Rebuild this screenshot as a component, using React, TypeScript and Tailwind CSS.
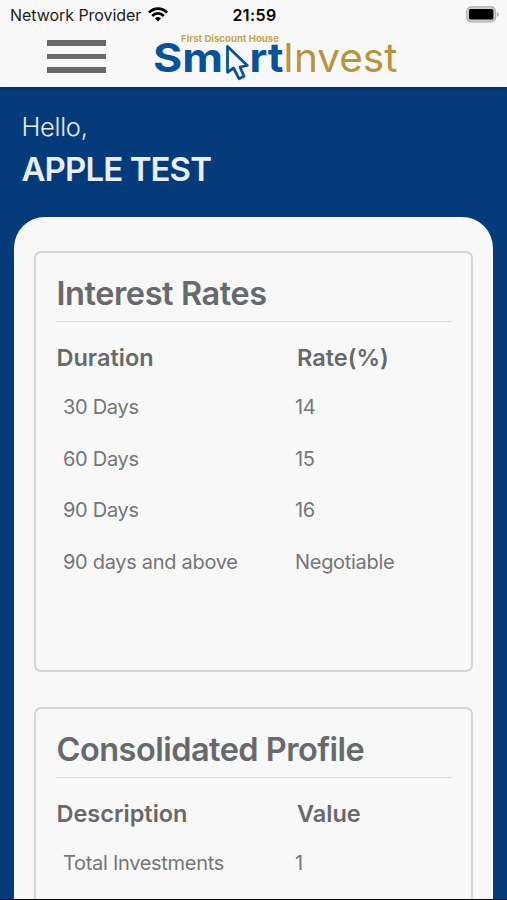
interface Row {
  label: string;
  value: string;
}

interface PanelProps {
  title: string;
  titleClass: string;
  columns: [string, string];
  rows: Row[];
  className?: string;
}

const rates: Row[] = [
  { label: "30 Days", value: "14" },
  { label: "60 Days", value: "15" },
  { label: "90 Days", value: "16" },
  { label: "90 days and above", value: "Negotiable" },
];

const profile: Row[] = [{ label: "Total Investments", value: "1" }];

function StatusBar() {
  return (
    <div className="grid h-7 grid-cols-[1fr_auto_1fr] items-center pl-2.5 pr-[8px] pt-[2px] text-black">
      <div className="flex items-center gap-[7px]">
        <span className="whitespace-nowrap text-[16px] leading-5 tracking-[-0.05px] text-[#1c1c1c]">Network Provider</span>
        <svg width="20" height="15" viewBox="0 0 20 15" fill="none" stroke="#000" strokeWidth="2.7" className="-mt-px">
          <path d="M1 5.6C6 .3 14 .3 19 5.6" />
          <path d="M4.2 9C7.5 5.6 12.5 5.6 15.8 9" />
          <path d="M10 14.4 7 11.4Q10 8.8 13 11.4Z" fill="#000" stroke="none" />
        </svg>
      </div>
      <span className="text-[16px] font-semibold leading-5 tracking-[0.4px]">21:59</span>
      <svg width="33" height="17" viewBox="0 0 33 17" className="-mt-[2px] justify-self-end">
        <rect x="0.8" y="0.8" width="28.8" height="15" rx="4.5" fill="#d0d0d0" stroke="#b0b0b0" strokeWidth="1.2" />
        <rect x="3" y="3" width="24.4" height="10.6" rx="1.6" fill="#000" />
        <path d="M31 6v4.8q1.8-.8 1.8-2.4T31 6Z" fill="#b0b0b0" />
      </svg>
    </div>
  );
}

function Logo() {
  return (
    <svg width="248" height="52" viewBox="0 0 248 52" aria-label="SmartInvest" fontFamily="Inter, sans-serif">
      <text x="30" y="11.5" fontSize="9.6" fontWeight="700" fill="#c6a552" textLength="98" lengthAdjust="spacingAndGlyphs">
        First Discount House
      </text>
      <g fill="#07539b" fontSize="40" fontWeight="750">
        <text x="2" y="41.5" textLength="70" lengthAdjust="spacingAndGlyphs">Sm</text>
        <text x="98.5" y="41.5" textLength="34" lengthAdjust="spacingAndGlyphs">rt</text>
      </g>
      <text x="132" y="41.5" fontSize="40" fontWeight="400" fill="#b8943b" textLength="114.5" lengthAdjust="spacingAndGlyphs">
        Invest
      </text>
      <path
        d="M76.5 16.5V42.3L82.5 38 88 48.7 93 46.2 89 37 96.3 35.5Z"
        fill="#f8f8f8"
        stroke="#07539b"
        strokeWidth="2.8"
        strokeLinejoin="round"
      />
    </svg>
  );
}

function Header() {
  return (
    <header className="relative h-[87px] shrink-0 bg-[#f8f8f8] shadow-[0_1px_4px_rgba(0,0,0,0.3)]">
      <StatusBar />
      <div className="flex items-start pl-[47px]">
        <button className="mt-[12px] flex w-[59px] flex-col gap-[8px]" aria-label="Menu">
          <span className="h-[5.5px] w-full bg-[#686868]" />
          <span className="h-[5.5px] w-full bg-[#686868]" />
          <span className="h-[5.5px] w-full bg-[#686868]" />
        </button>
        <div className="ml-[45px] mt-[2px]">
          <Logo />
        </div>
      </div>
    </header>
  );
}

function Panel({ title, titleClass, columns, rows, className = "" }: PanelProps) {
  return (
    <section className={`rounded-[7px] border-2 border-[#d5d5d5] px-[19.5px] pt-[21px] text-[#67696a] ${className}`}>
      <h2 className={`h-12 whitespace-nowrap border-b-[1.5px] border-[#dcdcdc] pl-px text-[32.5px] font-semibold leading-10 ${titleClass}`}>
        {title}
      </h2>
      <div className="grid grid-cols-[240.5px_1fr] pl-px pt-5 text-[23.5px] font-semibold leading-8">
        <span>{columns[0]}</span>
        <span>{columns[1]}</span>
      </div>
      <div className="mt-[7px]">
        {rows.map((row) => (
          <div
            key={row.label}
            className="grid h-[51.8px] grid-cols-[232px_1fr] items-center pl-[7.5px] text-[20px] leading-7 tracking-[-0.3px] text-[#747677]"
          >
            <span>{row.label}</span>
            <span>{row.value}</span>
          </div>
        ))}
      </div>
    </section>
  );
}

export default function App() {
  return (
    <div className="flex h-[900px] w-[507px] flex-col overflow-hidden border-b border-black bg-[#053b7b] font-['Inter',sans-serif]">
      <Header />
      <div className="h-[130px] shrink-0 pl-[21.5px] pt-6 text-[#e9edf4]">
        <p className="text-[25.5px] font-light leading-8 tracking-[-0.3px]">Hello,</p>
        <p className="mt-[6px] text-[33px] font-semibold leading-10 tracking-[-0.9px]">APPLE TEST</p>
      </div>
      <main className="mx-[14px] min-h-0 flex-1 overflow-hidden rounded-t-[31px] bg-[#f8f8f8] px-[20px] pt-[34px]">
        <Panel
          title="Interest Rates"
          titleClass="tracking-[-0.42px]"
          columns={["Duration", "Rate(%)"]}
          rows={rates}
          className="h-[421px]"
        />
        <Panel
          title="Consolidated Profile"
          titleClass="tracking-[-0.52px]"
          columns={["Description", "Value"]}
          rows={profile}
          className="mt-[35px] h-[300px]"
        />
      </main>
    </div>
  );
}
